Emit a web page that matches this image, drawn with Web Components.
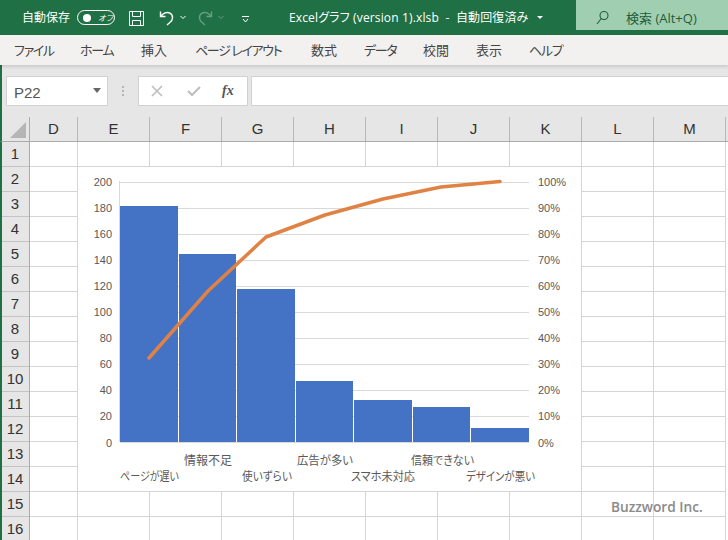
<!DOCTYPE html>
<html lang="ja">
<head>
<meta charset="utf-8">
<title>Excel</title>
<style>
  html, body { margin: 0; padding: 0; width: 728px; height: 540px; overflow: hidden; background: #fff; }
  body { font-family: "Open Sans", "Noto Sans CJK JP", sans-serif; position: relative; }
</style>
</head>
<body>
<title-bar></title-bar>
<ribbon-tabs></ribbon-tabs>
<formula-bar></formula-bar>
<work-sheet>
  <pareto-chart></pareto-chart>
</work-sheet>
<water-mark>Buzzword Inc.</water-mark>
<script>
const JP = '"Noto Sans CJK JP", sans-serif';

class TitleBar extends HTMLElement {
  constructor() {
    super();
    this.shadowDOM = this.attachShadow({ mode: 'open' });
  }

  connectedCallback() {
    this.shadowDOM.innerHTML = `
      <style>
        :host { display: flex; height: 35px; background: #1f7145; color: #fff; box-sizing: border-box; font: 12px "Open Sans", ${JP}; font-feature-settings: "palt"; }
        .autosave { margin-left: 22px; width: 55px; line-height: 35px; white-space: nowrap; font-feature-settings: normal; }
        .toggle { margin-top: 10px; width: 38px; height: 15px; flex: none; box-sizing: border-box; border: 1px solid #fff; border-radius: 8px; display: flex; align-items: center; font: italic 8px/13px ${JP}; white-space: nowrap; letter-spacing: -.5px; }
        .toggle i { width: 8px; height: 8px; border-radius: 50%; background: #fff; margin: 0 7px 0 5px; flex: none; }
        svg { display: block; flex: none; }
        .save { margin: 10px 0 0 13px; }
        .undo { margin: 10px 0 0 14px; }
        .caret { margin: 15px 0 0 5px; }
        .redo { margin: 10px 0 0 11px; opacity: .32; }
        .more { margin: 16px 0 0 18px; }
        .name { margin-left: 40px; width: 248px; line-height: 35px; white-space: pre; flex: none; letter-spacing: .14px; }
        .drop { width: 0; height: 0; margin: 16px 0 0 0; border: 3px solid transparent; border-top-color: #fff; flex: none; }
        .search { position: absolute; left: 576px; top: 0; width: 152px; padding-top: 5px; height: 25px; background: #9fcfb0; color: #1f5c3a; display: flex; align-items: center; font-size: 13px; }
        .search svg { margin-left: 20px; }
        .search span { margin-left: 17px; white-space: nowrap; }
      </style>
      <span class="autosave">自動保存</span>
      <span class="toggle"><i></i>オフ</span>
      <svg class="save" width="17" height="17" viewBox="0 0 17 17" fill="none" stroke="#fff" stroke-width="1"><path d="M1.500 1.500h14v14h-14zM4.500 1.500v5h8v-5M4.500 15.500v-5h8v5"/></svg>
      <svg class="undo" width="16" height="16" viewBox="0 0 16 16" fill="none" stroke="#fff" stroke-width="1.400"><path d="M1.500 1.500v5h5M1.800 6.300C4 3 8 1.500 11 3.200c3.500 2 3.300 7-.2 9.300L8 15"/></svg>
      <svg class="caret" width="6" height="5" viewBox="0 0 6 5" fill="none" stroke="#fff"><path d="M.5 1l2.500 2.500L5.500 1"/></svg>
      <svg class="redo" width="16" height="16" viewBox="0 0 16 16" fill="none" stroke="#fff" stroke-width="1.400"><path d="M14.500 1.500v5h-5M14.200 6.300C12 3 8 1.500 5 3.200c-3.500 2-3.300 7 .2 9.300L8 15"/></svg>
      <svg class="caret" style="opacity:.32" width="6" height="5" viewBox="0 0 6 5" fill="none" stroke="#fff"><path d="M.5 1l2.500 2.500L5.500 1"/></svg>
      <svg class="more" width="7" height="7" viewBox="0 0 7 7" fill="none" stroke="#fff"><path d="M0 .5h7M1 3l2.500 3L6 3"/></svg>
      <span class="name">Excelグラフ (version 1).xlsb  -  自動回復済み</span>
      <span class="drop"></span>
      <div class="search">
        <svg width="13" height="16" viewBox="0 0 13 16" fill="none" stroke="#1f5c3a" stroke-width="1.100"><circle cx="8" cy="5.500" r="4"/><path d="M5.300 8.500L1 14"/></svg>
        <span>検索 (Alt+Q)</span>
      </div>`;
  }
}

class RibbonTabs extends HTMLElement {
  constructor() {
    super();
    this.shadowDOM = this.attachShadow({ mode: 'open' });
  }

  connectedCallback() {
    const tabs = [['ファイル', 1], ['ホーム', 1], ['挿入', 0], ['ページ レイアウト', 1], ['数式', 0], ['データ', 1], ['校閲', 0], ['表示', 0], ['ヘルプ', 1]];
    this.shadowDOM.innerHTML = `
      <style>
        :host { display: grid; grid-template-columns: 66px 61px 54px 116px 53px 59px 53px 53px auto; height: 30px; background: #f3f1f0; color: #444; font: 13px/30px ${JP}; font-feature-settings: "palt"; box-shadow: 0 2px 3px rgba(0,0,0,.12); position: relative; padding-left: 14px; white-space: pre; }
        .kana { letter-spacing: -1.300px; }
      </style>
      ${tabs.map((t) => `<span class="${t[1] ? 'kana' : ''}">${t[0]}</span>`).join('')}`;
  }
}

class FormulaBar extends HTMLElement {
  constructor() {
    super();
    this.shadowDOM = this.attachShadow({ mode: 'open' });
  }

  connectedCallback() {
    this.shadowDOM.innerHTML = `
      <style>
        :host { display: flex; height: 52px; box-sizing: border-box; background: #e6e6e6; padding: 11px 0 11px 4px; border-left: 2px solid #1f7145; }
        .box { background: #fff; border: 1px solid #d2d2d2; box-sizing: border-box; height: 30px; display: flex; align-items: center; }
        .name { width: 102px; color: #555; font: 15px "Liberation Sans", sans-serif; padding: 2px 6px 0 7px; justify-content: space-between; }
        .name i { width: 0; height: 0; border: 4px solid transparent; border-top: 5px solid #666; border-bottom: 0; margin-top: -3px; }
        .dots { width: 30px; display: flex; flex-direction: column; align-items: center; justify-content: center; gap: 2px; padding-bottom: 1px; }
        .dots i { width: 2px; height: 2px; background: #b5b5b5; }
        .tools { width: 110px; }
        .tools svg, .tools span { flex: none; }
        .fx { font: italic bold 14px "Liberation Serif", serif; color: #555; margin-left: 21px; }
        .input { flex: 1; margin-left: 3px; border-right: 0; }
      </style>
      <div class="box name"><span>P22</span><i></i></div>
      <div class="dots"><i></i><i></i><i></i></div>
      <div class="box tools">
        <svg style="margin-left:12px" width="12" height="12" viewBox="0 0 12 12" stroke="#bdbdbd" stroke-width="1.600"><path d="M1 1l10 10M11 1L1 11"/></svg>
        <svg style="margin-left:24px" width="14" height="12" viewBox="0 0 14 12" fill="none" stroke="#bdbdbd" stroke-width="2"><path d="M1 6l4 4 8-8"/></svg>
        <span class="fx">fx</span>
      </div>
      <div class="box input"></div>`;
  }
}

class WorkSheet extends HTMLElement {
  constructor() {
    super();
    this.shadowDOM = this.attachShadow({ mode: 'open' });
  }

  connectedCallback() {
    const cols = ['D', 'E', 'F', 'G', 'H', 'I', 'J', 'K', 'L', 'M'];
    const rows = Array.from({ length: 16 }, (_, i) => i + 1);
    const cells = rows.map(() => cols.map(() => '<div class="cell"></div>').join('')).join('');
    this.shadowDOM.innerHTML = `
      <style>
        :host { display: grid; grid-template-columns: 30px 1fr; grid-template-rows: 25px 1fr; height: 423px; position: relative; overflow: hidden; background: #fff; font: 15px "Liberation Sans", sans-serif; color: #333; }
        .corner { background: #e6e6e6; border-right: 1px solid #ababab; border-bottom: 1px solid #ababab; box-sizing: border-box; position: relative; border-left: 2px solid #1f7145; }
        .corner i { position: absolute; right: 3px; bottom: 3px; border-style: solid; border-width: 0 0 16px 16px; border-color: transparent transparent #b5b5b5 transparent; }
        .cols { display: grid; grid-template-columns: 48px repeat(9, 72px); background: #e6e6e6; border-bottom: 1px solid #ababab; box-sizing: border-box; }
        .cols span { text-align: center; line-height: 24px; border-right: 1px solid #b8b8b8; box-sizing: border-box; }
        .rows { display: grid; grid-auto-rows: 25px; background: #e6e6e6; border-left: 2px solid #1f7145; border-right: 1px solid #ababab; }
        .rows span { text-align: center; line-height: 24px; border-bottom: 1px solid #c4c4c4; box-sizing: border-box; padding-right: 1px; }
        .grid { display: grid; grid-template-columns: 48px repeat(9, 72px); grid-auto-rows: 25px; }
        .cell { border-right: 1px solid #d4d4d4; border-bottom: 1px solid #d4d4d4; box-sizing: border-box; }
        ::slotted(pareto-chart) { position: absolute; left: 78px; top: 50px; }
      </style>
      <div class="corner"><i></i></div>
      <div class="cols">${cols.map((c) => `<span>${c}</span>`).join('')}</div>
      <div class="rows">${rows.map((r) => `<span>${r}</span>`).join('')}</div>
      <div class="grid">${cells}</div>
      <slot></slot>`;
  }
}

class ParetoChart extends HTMLElement {
  constructor() {
    super();
    this.shadowDOM = this.attachShadow({ mode: 'open' });
  }

  connectedCallback() {
    const left = 42;
    const right = 451;
    const top = 15.500;
    const bottom = 276;
    const step = (bottom - top) / 10;
    const lines = [];
    const axis = [];
    for (let i = 0; i <= 10; i += 1) {
      const y = top + step * i;
      lines.push(`<path d="M${left} ${Math.round(y) + 0.5}H${right}"/>`);
      axis.push(`<text x="34" y="${y + 4.500}" text-anchor="end">${200 - i * 20}</text>`);
      axis.push(`<text x="460" y="${y + 4.500}">${100 - i * 10}%</text>`);
    }
    const bars = [[42, 58, 40], [101, 57, 88], [159, 58, 123], [218, 57, 215], [276, 58, 234], [335, 57, 241], [393, 58, 262]];
    const labels = [
      ['ページが遅い', 42, 315, 59], ['情報不足', 106, 299, 48], ['使いずらい', 164, 315, 50], ['広告が多い', 219, 299, 56],
      ['スマホ未対応', 273, 315, 64], ['信頼できない', 333, 299, 63], ['デザインが悪い', 388, 315, 69],
    ];
    this.shadowDOM.innerHTML = `
      <style>
        :host { display: block; width: 503px; height: 324px; background: #fff; }
        svg { display: block; }
        text { font: 11px "Liberation Sans", ${JP}; fill: #595959; }
        .cat text { font: 12px ${JP}; font-feature-settings: "palt"; }
      </style>
      <svg width="503" height="324" viewBox="0 1 503 324">
        <g stroke="#d9d9d9" fill="none">${lines.join('')}<path d="M41.500 15v261"/></g>
        <g fill="#4472c4">${bars.map((b) => `<rect x="${b[0]}" y="${b[2]}" width="${b[1]}" height="${276 - b[2]}"/>`).join('')}</g>
        <polyline points="71,192 130,125 188,71 247,49 305,33 363,21 422,15.500" fill="none" stroke="#e08243" stroke-width="3.500" stroke-linejoin="round" stroke-linecap="round"/>
        <g>${axis.join('')}</g>
        <g class="cat">${labels.map((l) => `<text x="${l[1]}" y="${l[2]}" textLength="${l[3]}" lengthAdjust="spacingAndGlyphs">${l[0]}</text>`).join('')}</g>
      </svg>`;
  }
}

class WaterMark extends HTMLElement {
  constructor() {
    super();
    this.shadowDOM = this.attachShadow({ mode: 'open' });
  }

  connectedCallback() {
    this.shadowDOM.innerHTML = `
      <style>
        :host { position: absolute; left: 611px; top: 498px; font: 600 13.700px/18px "Open Sans", sans-serif; color: #8a8a8a; }
      </style>
      <slot></slot>`;
  }
}

customElements.define('title-bar', TitleBar);
customElements.define('ribbon-tabs', RibbonTabs);
customElements.define('formula-bar', FormulaBar);
customElements.define('work-sheet', WorkSheet);
customElements.define('pareto-chart', ParetoChart);
customElements.define('water-mark', WaterMark);
</script>
</body>
</html>
